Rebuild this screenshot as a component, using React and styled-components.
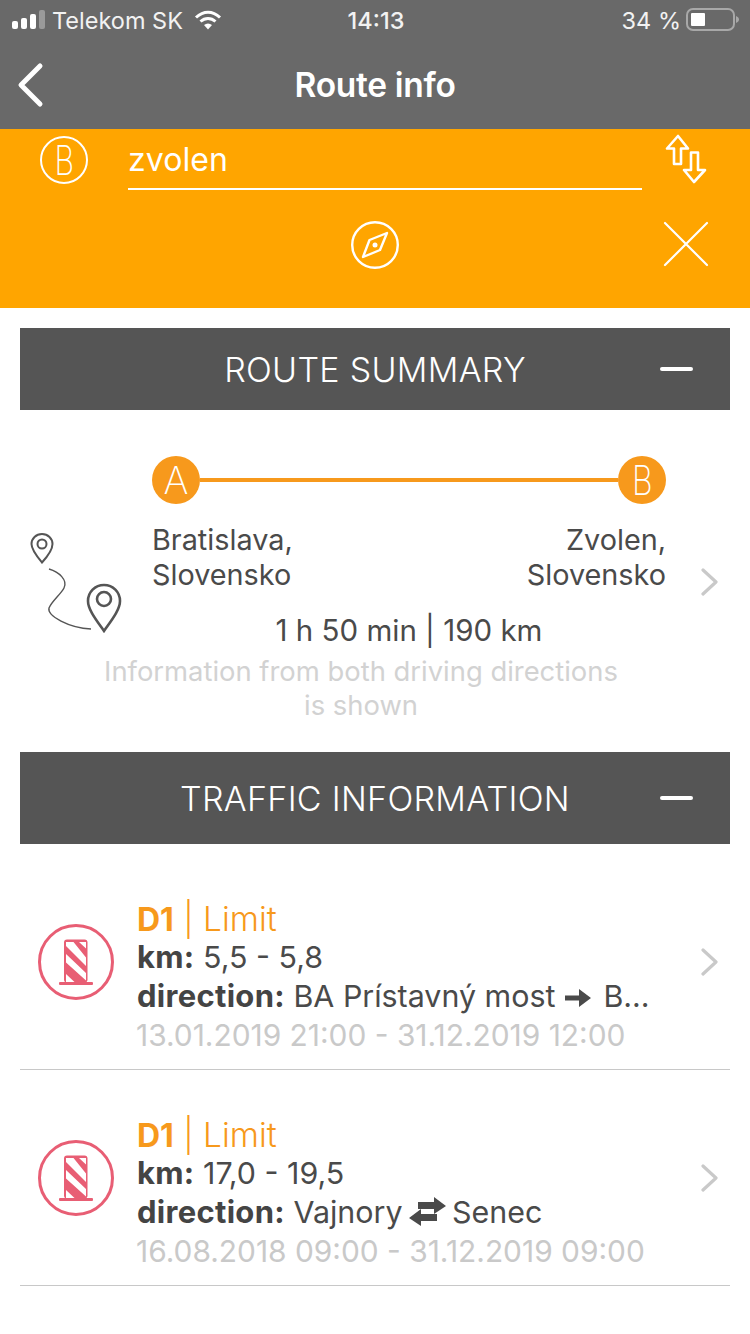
import React from "react";
import styled, { createGlobalStyle } from "styled-components";

const Global = createGlobalStyle`
  html, body { margin: 0; padding: 0; background: #fff; }
  body { font-family: Inter, "Noto Sans", sans-serif; color: #4a4a4a; }
`;
const Page = styled.div`width: 750px; height: 1334px; overflow: hidden; background: #fff;`;
const Header = styled.header`background: #696969; height: 129px; color: #fff; display: flex; flex-direction: column;`;
const StatusBar = styled.div`height: 40px; display: grid; grid-template-columns: 1fr auto 1fr; align-items: center; padding: 0 10px 0 12px; font-size: 23.500px; color: #f2f2f2;`;
const StatusLeft = styled.div`display: flex; align-items: center;`;
const Carrier = styled.span`margin-left: 4px;`;
const Wifi = styled.svg`margin-left: 11px;`;
const Time = styled.span`font-weight: 500; font-size: 23.500px;`;
const StatusRight = styled.div`display: flex; align-items: center; justify-content: flex-end; gap: 5px;`;
const NavBar = styled.div`flex: 1; display: flex; align-items: center; justify-content: center; position: relative;`;
const NavTitle = styled.h1`margin: 0; font-size: 33.500px; font-weight: 600; letter-spacing: -0.3px;`;
const BackIcon = styled.svg`position: absolute; left: 16px; top: 22px;`;
const SearchPanel = styled.section`background: #ffa500; height: 179px; color: #fff; display: grid; grid-template-columns: 128px 514px 108px; grid-template-rows: 61px 1fr;`;
const BCell = styled.div`display: flex; justify-content: flex-end; align-items: flex-start; padding: 7px 40px 0 0;`;
const BadgeOutline = styled.div`width: 48px; height: 48px; box-sizing: border-box; border: 2px solid #fff; border-radius: 50%; display: flex; align-items: center; justify-content: center;`;
const Letter = styled.span`display: block; font-size: ${p => p.$size}px; font-weight: 200; line-height: 1; transform: scaleX(${p => p.$scale || 1});`;
const Field = styled.div`height: 61px; box-sizing: border-box; border-bottom: 2px solid #fff; font-size: 32px; line-height: 61px; letter-spacing: 0.1px;`;
const IconCell = styled.div`display: flex; padding-top: ${p => p.$top}px; padding-left: ${p => p.$left}px;`;
const Compass = styled.div`grid-column: 1 / 3; display: flex; justify-content: center; padding-top: 30px;`;
const Section = styled.div`margin: ${p => p.$top}px 20px 0; height: ${p => p.$h}px; background: #555; color: #fff; display: flex; align-items: center; justify-content: center; position: relative; font-size: 34px; font-weight: 300; letter-spacing: 0.3px;`;
const Minus = styled.span`position: absolute; right: 37px; top: calc(50% - 2px); width: 33px; height: 4px; background: #fff; border-radius: 2px;`;
const Summary = styled.section`display: grid; grid-template-columns: 20px 110px 1fr 64px; height: 342px; position: relative;`;
const MapIcon = styled.svg`grid-column: 2; grid-row: 1; margin-top: 121px;`;
const SummaryBody = styled.div`grid-column: 3; padding: 46px 0 0 22px; display: flex; flex-direction: column;`;
const Track = styled.div`display: flex; align-items: center; width: 514px;`;
const Dot = styled.div`width: 48px; height: 48px; border-radius: 50%; background: #f7991c; color: #fff; display: flex; align-items: center; justify-content: center; flex: none;`;
const Line = styled.div`flex: 1; height: 4px; background: #f7991c;`;
const Places = styled.div`display: flex; justify-content: space-between; width: 514px; margin-top: 18px; font-size: 28.800px; line-height: 35px; color: #4a4a4a;`;
const Place = styled.div`text-align: ${p => p.$right ? "right" : "left"};`;
const Duration = styled.div`font-size: 29.500px; line-height: 35px; text-align: center; margin-top: 21px; width: 614px; margin-left: -50px; color: #4a4a4a;`;
const Note = styled.div`font-size: 27.400px; line-height: 34px; color: #d2d2d2; text-align: center; width: 614px; margin-left: -98px; margin-top: 6px;`;
const Chevron = styled.svg`position: absolute; right: ${p => p.$right}px; top: ${p => p.$top}px;`;
const List = styled.div`padding-top: 56px;`;
const Item = styled.article`display: flex; margin: 0 20px 46px; height: 170px; border-bottom: 1px solid #c8c8c8; position: relative; box-sizing: border-box;`;
const ItemIcon = styled.svg`margin: 24px 0 0 18px; flex: none;`;
const ItemText = styled.div`margin-left: 23px; font-size: 30.400px; color: #4a4a4a; white-space: nowrap;`;
const ItemTitle = styled.div`height: 38px; color: #f7991c; font-weight: 300; font-size: 33.400px; line-height: 38px;`;
const TitleRoad = styled.b`font-weight: 700; font-size: 32px;`;
const Row = styled.div`height: 39px; line-height: 38px;`;
const Strong = styled.b`font-weight: 700; color: #444; font-size: 31px; letter-spacing: 0.3px;`;
const Dates = styled.div`height: 39px; line-height: 38px; color: #c9c9c9; font-size: 29.900px; margin-left: -1px;`;
const Inline = styled.svg`vertical-align: ${p => p.$v}px; margin: ${p => p.$m};`;

const Signal = () => (
  <svg width="36" height="20" viewBox="0 0 36 20">
    <rect x="0" y="11" width="6" height="8" rx="2" fill="#fff" />
    <rect x="9" y="8" width="6" height="11" rx="2" fill="#fff" />
    <rect x="18" y="4" width="6" height="15" rx="2" fill="#fff" />
    <rect x="27" y="0" width="6" height="19" rx="2" fill="#9a9a9a" />
  </svg>
);
const Battery = () => (
  <svg width="54" height="24" viewBox="0 0 54 24">
    <rect x="1" y="1" width="47" height="21" rx="6" fill="none" stroke="#a8a8a8" strokeWidth="2" />
    <rect x="5" y="5" width="14" height="13" rx="1" fill="#fff" />
    <path d="M50 8c2 1 3 2 3 3.500s-1 2.500-3 3.500z" fill="#a8a8a8" />
  </svg>
);
const Barrier = () => (
  <ItemIcon width="76" height="76" viewBox="0 0 76 76">
    <circle cx="38" cy="38" r="36.500" fill="none" stroke="#e85e74" strokeWidth="3" />
    <rect x="26" y="15.500" width="23.500" height="43" rx="3" fill="#e85e74" />
    <path d="M28 18H35.500L48 33.500V42L28 22zM28 30 48 49V56.500L28 38.500zM41 18H48V24.500zM28 50 36.500 58H28z" fill="#fff" />
    <rect x="21" y="58" width="34" height="3" rx="1" fill="#e85e74" />
  </ItemIcon>
);
const Chev = ({ top, right }) => (
  <Chevron $top={top} $right={right} width="20" height="28" viewBox="0 0 20 28">
    <path d="M3 2 16 14 3 26" fill="none" stroke="#c9c9c9" strokeWidth="3.200" strokeLinecap="round" strokeLinejoin="round" />
  </Chevron>
);

export default function App() {
  return (
    <Page>
      <Global />
      <Header>
        <StatusBar>
          <StatusLeft>
            <Signal />
            <Carrier>Telekom SK</Carrier>
            <Wifi width="28" height="20" viewBox="0 0 28 20">
              <path d="M2 7.500C9.500 .5 18.500 .5 26 7.500" fill="none" stroke="#fff" strokeWidth="3" />
              <path d="M6.500 11.500C11 7.500 17 7.500 21.500 11.500" fill="none" stroke="#fff" strokeWidth="3" />
              <path d="M10 15c2.500-2 5.500-2 8 0l-4 4.500z" fill="#fff" />
            </Wifi>
          </StatusLeft>
          <Time>14:13</Time>
          <StatusRight>
            <span>34 %</span>
            <Battery />
          </StatusRight>
        </StatusBar>
        <NavBar>
          <BackIcon width="30" height="46" viewBox="0 0 30 46">
            <path d="M24 4 5 23 24 42" fill="none" stroke="#fff" strokeWidth="5" strokeLinecap="round" strokeLinejoin="round" />
          </BackIcon>
          <NavTitle>Route info</NavTitle>
        </NavBar>
      </Header>

      <SearchPanel>
        <BCell><BadgeOutline><Letter $size={41} $scale={0.74}>B</Letter></BadgeOutline></BCell>
        <Field>zvolen</Field>
        <IconCell $top={5} $left={22}>
          <svg width="44" height="50" viewBox="0 0 44 50">
            <path d="M14 2 3 14.500H10V30H17V14.500H24z" fill="none" stroke="#fff" strokeWidth="2.600" strokeLinejoin="round" />
            <path d="M30 48 41 36H34V18.500H27V36H20z" fill="none" stroke="#fff" strokeWidth="2.600" strokeLinejoin="round" />
          </svg>
        </IconCell>
        <Compass>
          <svg width="50" height="50" viewBox="0 0 50 50" style={{ marginLeft: 108 }}>
            <circle cx="25" cy="25" r="22.800" fill="none" stroke="#fff" strokeWidth="2.400" />
            <path d="M37 13 30 30 13 37 19.500 20z" fill="none" stroke="#fff" strokeWidth="2.400" strokeLinejoin="round" />
            <circle cx="25" cy="25" r="2.500" fill="#fff" />
          </svg>
        </Compass>
        <IconCell $top={30} $left={20}>
          <svg width="48" height="48" viewBox="0 0 48 48">
            <path d="M3 3 45 45M45 3 3 45" fill="none" stroke="#fff" strokeWidth="2.200" strokeLinecap="round" />
          </svg>
        </IconCell>
      </SearchPanel>

      <Section $top={20} $h={82}>ROUTE SUMMARY<Minus /></Section>

      <Summary>
        <MapIcon width="110" height="110" viewBox="0 0 110 110">
          <path d="M22 3c-6 0-10.500 4.500-10.500 10 0 6 6 13 10.500 18.500C27 26 32.500 19 32.500 13 32.500 7.500 28 3 22 3z" fill="none" stroke="#555" strokeWidth="2" />
          <circle cx="22" cy="13" r="4.500" fill="none" stroke="#555" strokeWidth="2" />
          <path d="M29 38c10 3 19 11 15 19-3 6-12 13-15 20 -2 8 20 20 42 21" fill="none" stroke="#555" strokeWidth="1.400" />
          <path d="M84 54c-9 0-16 7-16 16 0 9 9 20 16 30 7-10 16-21 16-30 0-9-7-16-16-16z" fill="none" stroke="#555" strokeWidth="2.600" />
          <circle cx="84" cy="68" r="7" fill="none" stroke="#555" strokeWidth="2.600" />
        </MapIcon>
        <SummaryBody>
          <Track>
            <Dot><Letter $size={38}>A</Letter></Dot>
            <Line />
            <Dot><Letter $size={41} $scale={0.78}>B</Letter></Dot>
          </Track>
          <Places>
            <Place>Bratislava,<br />Slovensko</Place>
            <Place $right>Zvolen,<br />Slovensko</Place>
          </Places>
          <Duration>1 h 50 min | 190 km</Duration>
          <Note>Information from both driving directions<br />is shown</Note>
        </SummaryBody>
        <Chev top={158} right={30} />
      </Summary>

      <Section $top={0} $h={92}>TRAFFIC INFORMATION<Minus /></Section>

      <List>
        <Item>
          <Barrier />
          <ItemText>
            <ItemTitle><TitleRoad>D1</TitleRoad> | Limit</ItemTitle>
            <Row><Strong>km:</Strong> 5,5 - 5,8</Row>
            <Row><Strong>direction:</Strong> BA Prístavný most <Inline $v={-1} $m="0 3px 0 0" width="28" height="20" viewBox="0 0 28 20"><path d="M1 7.500H15V1L27 10 15 19V12.500H1z" fill="#4a4a4a" /></Inline> B...</Row>
            <Dates>13.01.2019 21:00 - 31.12.2019 12:00</Dates>
          </ItemText>
          <Chev top={48} right={10} />
        </Item>
        <Item>
          <Barrier />
          <ItemText>
            <ItemTitle><TitleRoad>D1</TitleRoad> | Limit</ItemTitle>
            <Row><Strong>km:</Strong> 17,0 - 19,5</Row>
            <Row><Strong>direction:</Strong> Vajnory <Inline $v={-4} $m="0 6px 0 -2px" width="37" height="30" viewBox="0 0 37 30"><path d="M37 9 25 0V5H9V12H25V17zM0 21 12 12V17H28V24H12V29z" fill="#4a4a4a" /></Inline>Senec</Row>
            <Dates>16.08.2018 09:00 - 31.12.2019 09:00</Dates>
          </ItemText>
          <Chev top={48} right={10} />
        </Item>
      </List>
    </Page>
  );
}
